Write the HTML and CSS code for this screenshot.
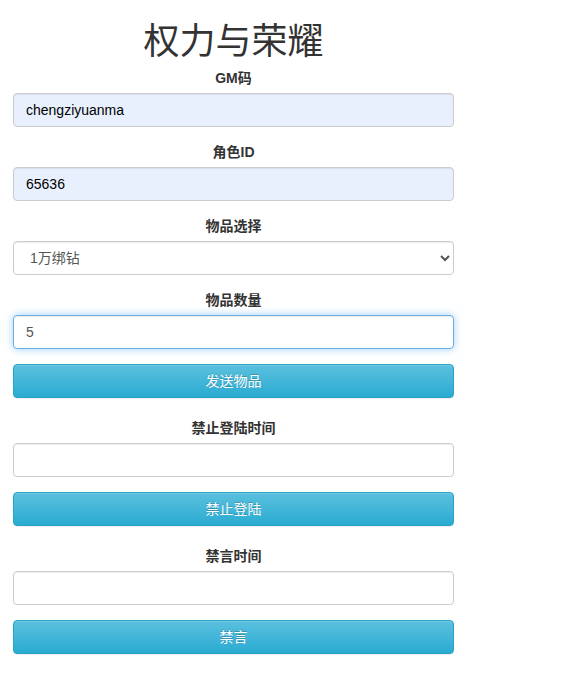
FILE: index.html
```html
<!DOCTYPE html>
<html>
<head>
<meta charset="utf-8">
<link rel="stylesheet" href="styles.css">
</head>
<body>
<div class="container">
  <h1 class="title">权力与荣耀</h1>
  <div class="group">
    <label class="label">GM码</label>
    <input class="control autofill" type="text" value="chengziyuanma">
  </div>
  <div class="group">
    <label class="label">角色ID</label>
    <input class="control autofill" type="text" value="65636">
  </div>
  <div class="group">
    <label class="label">物品选择</label>
    <select class="control select">
      <option>1万绑钻</option>
    </select>
  </div>
  <div class="group">
    <label class="label">物品数量</label>
    <input class="control focus" type="text" value="5">
  </div>
  <button class="btn">发送物品</button>
  <div class="group">
    <label class="label">禁止登陆时间</label>
    <input class="control" type="text">
  </div>
  <button class="btn">禁止登陆</button>
  <div class="group">
    <label class="label">禁言时间</label>
    <input class="control" type="text">
  </div>
  <button class="btn">禁言</button>
</div>
</body>
</html>
```
FILE: styles.css
```css
html, body {
  margin: 0;
  padding: 0;
  background: #fff;
}
body {
  font-family: "Liberation Sans", Arial, "Noto Sans CJK SC", sans-serif;
  font-size: 14px;
  line-height: 20px;
  color: #333;
}
.container {
  width: 441px;
  margin-left: 13px;
  display: flex;
  flex-direction: column;
}
.title {
  margin: 18px 0 10px;
  font-size: 36px;
  line-height: 40px;
  font-weight: 400;
  text-align: center;
  color: #333;
  font-family: "Noto Sans CJK SC", sans-serif;
}
.group {
  display: flex;
  flex-direction: column;
  margin-bottom: 15px;
}
.label {
  display: block;
  text-align: center;
  font-weight: bold;
  margin-bottom: 5px;
  height: 20px;
}
.control {
  box-sizing: border-box;
  width: 100%;
  height: 34px;
  padding: 6px 12px;
  font-family: "Liberation Sans", Arial, "Noto Sans CJK SC", sans-serif;
  font-size: 14px;
  line-height: 20px;
  color: #555;
  background: #fff;
  border: 1px solid #ccc;
  border-radius: 4px;
  box-shadow: inset 0 1px 1px rgba(0,0,0,.075);
  outline: none;
  margin: 0;
}
.autofill {
  background: #e8f0fe;
  color: #000;
}
.select {
  padding: 6px 8px 6px 12px;
}
.focus {
  border-color: #66afe9;
  box-shadow: inset 0 1px 1px rgba(0,0,0,.075), 0 0 8px rgba(102,175,233,.6);
}
.btn {
  box-sizing: border-box;
  width: 100%;
  height: 34px;
  margin: 0 0 20px;
  padding: 6px 12px;
  font-family: "Liberation Sans", Arial, "Noto Sans CJK SC", sans-serif;
  font-size: 14px;
  line-height: 20px;
  color: #fff;
  border: 1px solid #28a4c9;
  border-radius: 4px;
  background-image: linear-gradient(to bottom, #5bc0de 0, #2aabd2 100%);
  box-shadow: inset 0 1px 0 rgba(255,255,255,.15), 0 1px 1px rgba(0,0,0,.075);
  text-shadow: 0 -1px 0 rgba(0,0,0,.2);
  cursor: pointer;
}
```
